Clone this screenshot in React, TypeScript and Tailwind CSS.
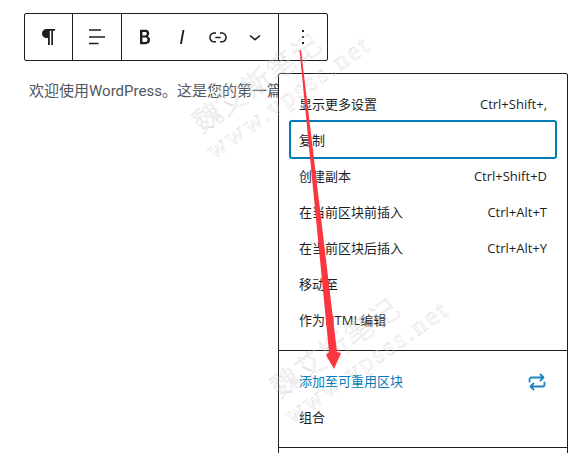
const font = { fontFamily: '"Open Sans","Noto Sans CJK SC",sans-serif' };

function Row({ label, hint, cls = "", icon }: { label: string; hint?: string; cls?: string; icon?: React.ReactNode }) {
  return (
    <div className={`flex h-9 items-center justify-between px-2.5 text-[13px] ${cls}`}>
      <span>{label}</span>
      {hint && <span className="text-[#1e1e1e]">{hint}</span>}
      {icon}
    </div>
  );
}

function Watermark({ cls }: { cls: string }) {
  return (
    <div className={`pointer-events-none absolute whitespace-nowrap ${cls}`} style={{ WebkitTextStroke: "0.35px #cfcfcf", color: "transparent", transform: "rotate(-35deg)", transformOrigin: "left top", fontFamily: '"Liberation Serif","Noto Sans CJK SC",serif' }}>
      <div className="text-[28px] font-light leading-[30px] tracking-[2px]">魏艾斯笔记</div>
      <div className="-ml-[5px] text-[26px] leading-[28px] tracking-[3px]">www.vpsss.net</div>
    </div>
  );
}

export default function App() {
  return (
    <div className="relative h-[453px] w-[573px] overflow-hidden bg-white text-[#1e1e1e]" style={font}>
      <div className="px-6 pt-[13px]">
        <div className="flex h-[48px] w-[304px] rounded-[2px] border border-[#1e1e1e]">
          <div className="flex w-[48px] items-center justify-center border-r border-[#1e1e1e]">
            <svg width="24" height="24" viewBox="0 0 24 24" fill="#1e1e1e"><path d="M18 4H9.5a4.5 4.5 0 0 0 0 9H11v7h1.8V5.7h1.5V20H16V5.7h2z" /></svg>
          </div>
          <div className="flex w-[49px] items-center justify-center border-r border-[#1e1e1e]">
            <svg width="24" height="24" viewBox="0 0 24 24" fill="#1e1e1e"><path d="M4 4.2h12v1.5H4zM4 11.2h16v1.5H4zM4 17.8h9.5v1.5H4z" /></svg>
          </div>
          <div className="flex w-[157px] items-center gap-[12.5px] border-r border-[#1e1e1e] pl-[11px]">
            <svg width="24" height="24" viewBox="0 0 24 24" fill="#1e1e1e"><path d="M14.7 11.3c1-.6 1.5-1.6 1.5-3 0-1-.4-1.9-1-2.5-.6-.7-1.6-1-2.8-1H7v14.4h5.8c1.2 0 2.2-.4 3-1.1.8-.8 1.2-1.8 1.2-3 0-1.8-.8-3.1-2.3-3.8zM9.4 6.9h2.6c1.2 0 1.8.6 1.8 1.7s-.6 1.8-1.8 1.8H9.4zm3 10.1h-3v-4.4h3c1.3 0 2 .8 2 2.2s-.7 2.2-2 2.2z" /></svg>
            <svg width="24" height="24" viewBox="0 0 24 24" fill="#1e1e1e"><path d="M12.5 5L10 19h1.9l2.5-14z" /></svg>
            <svg width="24" height="24" viewBox="0 0 24 24" fill="#1e1e1e"><path d="M15.6 7.2H14v1.5h1.6c2 0 3.7 1.7 3.7 3.7s-1.7 3.7-3.7 3.7H14v1.5h1.6c2.8 0 5.2-2.3 5.2-5.2 0-2.9-2.3-5.2-5.2-5.2zM4.7 12.4c0-2 1.7-3.7 3.7-3.7H10V7.2H8.4c-2.9 0-5.2 2.3-5.2 5.2 0 2.9 2.3 5.2 5.2 5.2H10v-1.5H8.4c-2 0-3.7-1.7-3.7-3.7zm4.6.9h5.3v-1.5H9.3z" /></svg>
            <svg width="24" height="24" viewBox="0 0 24 24" fill="none" stroke="#1e1e1e" strokeWidth="1.6"><path d="M7 10.5l5 4.2 5-4.2" /></svg>
          </div>
          <div className="flex flex-1 items-center justify-center">
            <svg width="24" height="24" viewBox="0 0 24 24" fill="#1e1e1e"><path d="M13 19h-2v-2h2zm0-6h-2v-2h2zm0-6h-2V5h2z" /></svg>
          </div>
        </div>
      </div>

      <p className="mt-5 whitespace-nowrap pl-[29px] text-[15px] leading-5 text-[#50575e]" style={{ fontFamily: 'Roboto,"Noto Sans CJK SC",sans-serif' }}>欢迎使用WordPress。这是您的第一篇</p>

      <div className="absolute left-[278px] top-[73px] h-[400px] w-[290px] rounded-[2px] border border-[#1e1e1e] bg-white">
        <div className="border-b border-[#1e1e1e] px-2.5 pt-[13px] pb-[11px]">
          <Row label="显示更多设置" hint="Ctrl+Shift+," />
          <Row label="复制" cls="-mt-[3px] !h-[39px] rounded-[3px] pt-[3px] outline-2 -outline-offset-2 outline-[#007cba]" />
          <Row label="创建副本" hint="Ctrl+Shift+D" />
          <Row label="在当前区块前插入" hint="Ctrl+Alt+T" />
          <Row label="在当前区块后插入" hint="Ctrl+Alt+Y" />
          <Row label="移动至" />
          <Row label="作为HTML编辑" />
        </div>
        <div className="border-b border-[#1e1e1e] px-2.5 pt-[13px] pb-[11px]">
          <Row
            label="添加至可重用区块"
            cls="text-[#007cba]"
            icon={
              <svg className="-mr-[2px]" width="24" height="24" viewBox="0 0 24 24" fill="none" stroke="#1a86c0" strokeWidth="1.8" strokeLinecap="round" strokeLinejoin="round"><path d="M4.5 11.5V9.5a2 2 0 0 1 2-2h12M15.5 4.5l3 3-3 3M19.5 12.5v2a2 2 0 0 1-2 2h-12M8.5 13.5l-3 3 3 3" /></svg>
            }
          />
          <Row label="组合" />
        </div>
      </div>

      <Watermark cls="left-[188px] top-[114px]" />
      <Watermark cls="left-[266px] top-[379px]" />

      <svg className="pointer-events-none absolute left-0 top-0" width="573" height="453" viewBox="0 0 573 453">
        <polygon points="299.5,50 301,50 337,352 341,353 334,369 326,355 329,352" fill="#fb3640" />
      </svg>
    </div>
  );
}
